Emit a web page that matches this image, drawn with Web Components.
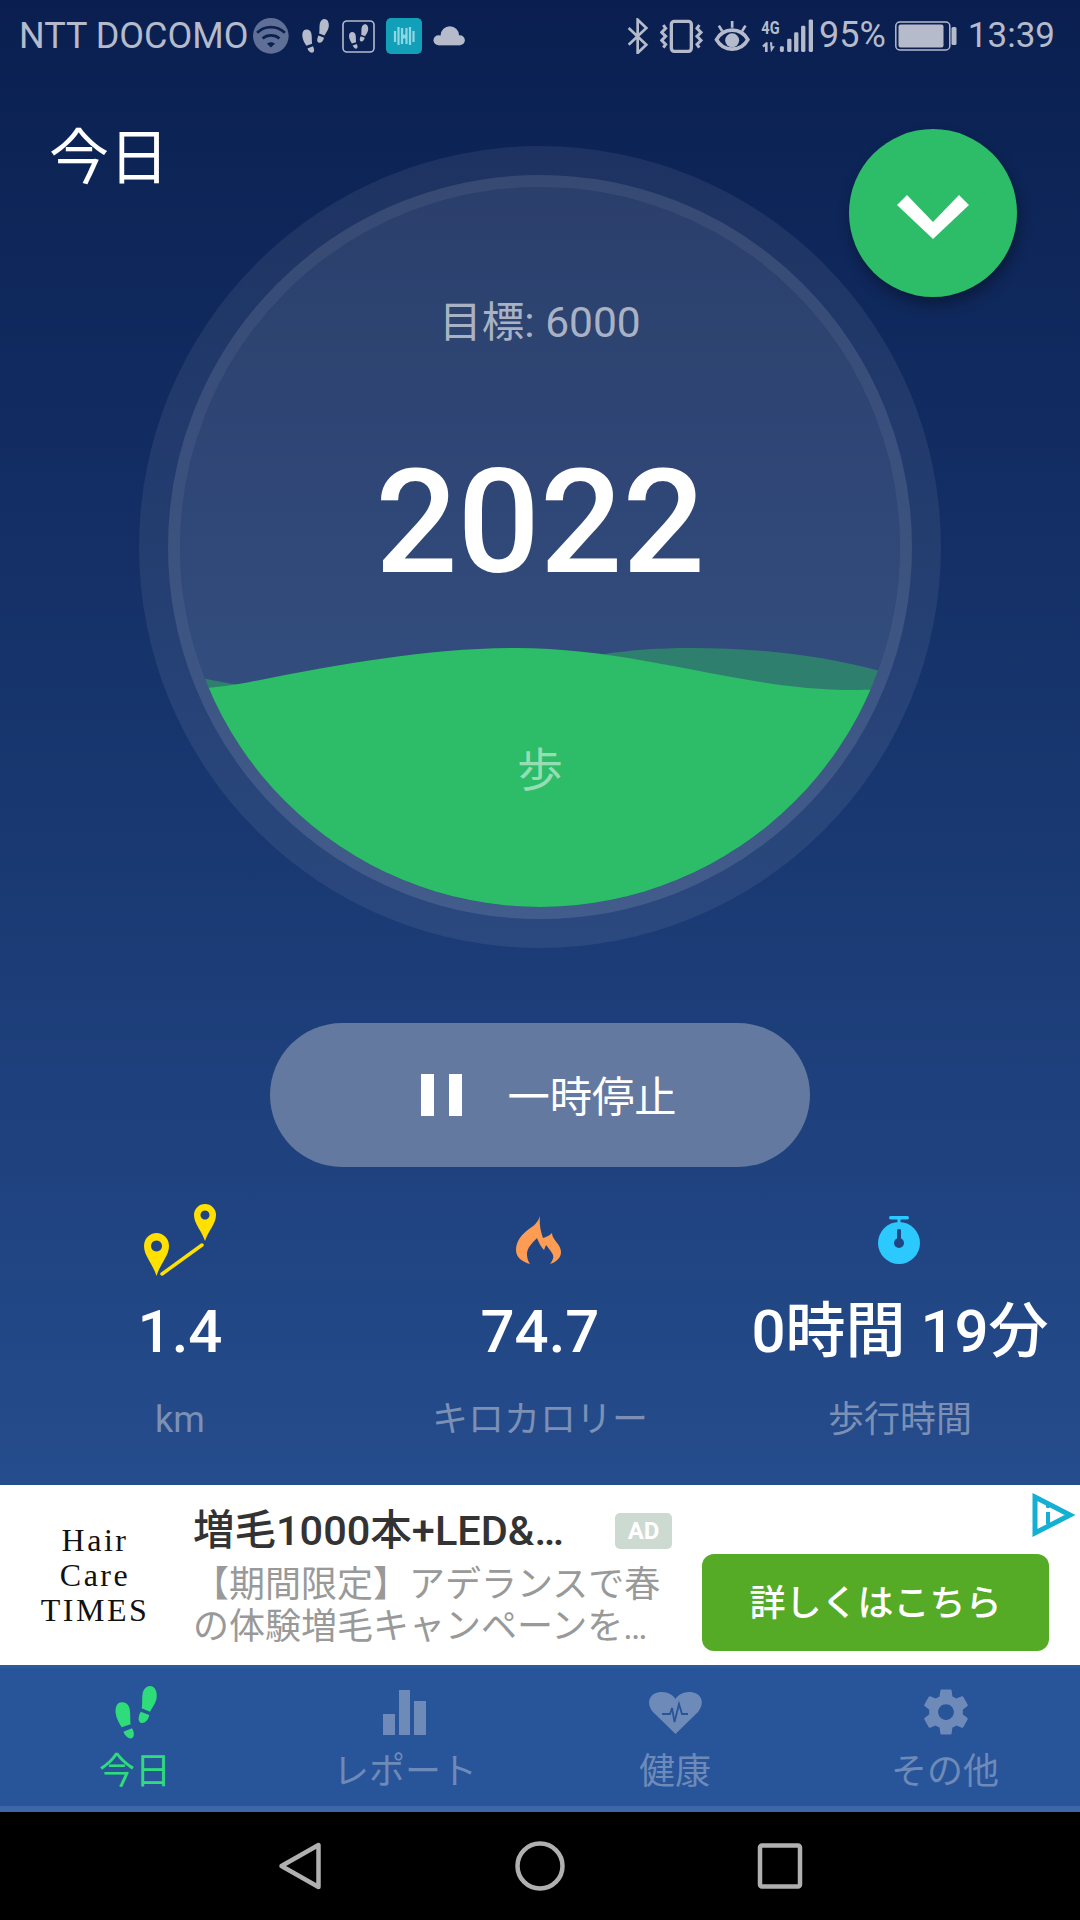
<!DOCTYPE html>
<html lang="ja">
<head>
<meta charset="utf-8">
<title>今日</title>
<style>
html,body{margin:0;padding:0;background:#000}
body{width:1080px;height:1920px;overflow:hidden;font-family:Roboto,"Noto Sans CJK JP",sans-serif}
</style>
</head>
<body>
<app-screen>
  <status-bar></status-bar>
  <today-title>今日</today-title>
  <step-dial goal="目標: 6000" steps="2022" unit="歩"></step-dial>
  <pause-button>一時停止</pause-button>
  <stat-row>
    <stat-item value="1.4" label="km">
      <svg slot="icon" width="360" height="72" viewBox="0 1204 360 72">
        <path fill="#ffe000" fill-rule="evenodd" d="M156.5 1276 C153 1264 144 1256 144 1246 A12.5 13 0 0 1 169 1246 C169 1256 160 1264 156.5 1276Z M156.5 1240.5a5.5 5.5 0 1 0 .01 0Z"/>
        <path fill="#ffe000" fill-rule="evenodd" d="M205 1241 C202 1231 194 1224 194 1215 A11 11 0 0 1 216 1215 C216 1224 208 1231 205 1241Z M205 1210.5a4.5 4.5 0 1 0 .01 0Z"/>
        <path stroke="#ffe000" stroke-width="3.5" stroke-linecap="round" d="M162 1274 L202 1245"/>
      </svg>
    </stat-item>
    <stat-item value="74.7" label="キロカロリー">
      <svg slot="icon" width="360" height="72" viewBox="360 1204 360 72">
        <path fill="#ff9c54" d="M540 1216 C539 1225 541 1232 543 1238 C546 1237 549 1236 552 1233 C552 1240 561 1244 561 1252 C561 1258 556 1262 550 1264 C554 1259 554 1256 552 1253 C550 1250 548 1247 546 1245 L544 1250 C541 1247 539 1243 537 1238 C532 1243 527 1248 527 1254 C527 1258 528 1261 530 1264 C523 1262 516 1258 516 1250 C516 1241 522 1234 529 1229 C534 1226 538 1222 540 1216Z"/>
      </svg>
    </stat-item>
    <stat-item value="0時間 19分" label="歩行時間">
      <svg slot="icon" width="360" height="72" viewBox="720 1204 360 72">
        <rect x="889" y="1216" width="20" height="3.5" rx="1.7" fill="#2cc9ff"/>
        <rect x="897.5" y="1219" width="3" height="5" fill="#2cc9ff"/>
        <circle cx="899" cy="1243" r="21" fill="#2cc9ff"/>
        <rect x="897" y="1229" width="4" height="14" rx="1.5" fill="#1f4583"/>
        <circle cx="899" cy="1243" r="5" fill="#1f4583"/>
      </svg>
    </stat-item>
  </stat-row>
  <ad-banner></ad-banner>
  <tab-bar>
    <tab-item active label="今日">
      <svg slot="icon" width="270" height="56" viewBox="0 1684 270 56">
        <g fill="#2edc7a" transform="translate(100 1675) scale(.3333)">
          <path d="M68 82C52 80 45 95 47 115C49 132 58 145 65 157L92 148C90 130 92 110 88 98C85 88 78 83 68 82Z"/>
          <path d="M70 170L96 160C102 170 104 182 98 188C90 194 78 188 70 170Z"/>
          <path d="M150 33C165 33 172 50 170 68C168 85 155 100 150 110L125 100C128 85 125 70 128 55C131 42 140 33 150 33Z"/>
          <path d="M122 110L148 120C145 135 135 145 125 144C115 142 112 130 122 110Z"/>
        </g>
      </svg>
    </tab-item>
    <tab-item label="レポート">
      <svg slot="icon" width="270" height="56" viewBox="270 1684 270 56" fill="#6d8ab8">
        <rect x="383" y="1714" width="12" height="21"/>
        <rect x="399" y="1690" width="11" height="45"/>
        <rect x="414" y="1701" width="12" height="34"/>
      </svg>
    </tab-item>
    <tab-item label="健康">
      <svg slot="icon" width="270" height="56" viewBox="540 1684 270 56">
        <path fill="#6d8ab8" d="M675.5 1734L653 1712C645 1702 650 1692 662 1692C668 1692 673 1695 675.5 1699C678 1695 683 1692 689 1692C701 1692 706 1702 698 1712Z"/>
        <path fill="none" stroke="#28549a" stroke-width="1.8" d="M662 1714H670L672 1708L674.500 1722L679 1704L682 1714H688"/>
      </svg>
    </tab-item>
    <tab-item label="その他">
      <svg slot="icon" width="270" height="56" viewBox="810 1684 270 56">
        <g transform="translate(919 1685) scale(2.25)"><path fill="#6d8ab8" d="M19.43 12.98c.04-.32.07-.64.07-.98s-.03-.66-.07-.98l2.11-1.65c.19-.15.24-.42.12-.64l-2-3.46c-.12-.22-.39-.3-.61-.22l-2.49 1c-.52-.4-1.08-.73-1.69-.98l-.38-2.65C14.46 2.18 14.25 2 14 2h-4c-.25 0-.46.18-.49.42l-.38 2.65c-.61.25-1.17.59-1.69.98l-2.49-1c-.23-.09-.49 0-.61.22l-2 3.46c-.13.22-.07.49.12.64l2.11 1.65c-.04.32-.07.65-.07.98s.03.66.07.98l-2.11 1.65c-.19.15-.24.42-.12.64l2 3.46c.12.22.39.3.61.22l2.49-1c.52.4 1.08.73 1.69.98l.38 2.65c.03.24.24.42.49.42h4c.25 0 .46-.18.49-.42l.38-2.65c.61-.25 1.17-.59 1.69-.98l2.49 1c.23.09.49 0 .61-.22l2-3.46c.12-.22.07-.49-.12-.64l-2.11-1.65zM12 15.5c-1.93 0-3.5-1.57-3.5-3.5s1.57-3.5 3.5-3.5 3.5 1.57 3.5 3.5-1.57 3.5-3.5 3.5z"/></g>
      </svg>
    </tab-item>
  </tab-bar>
  <system-nav></system-nav>
</app-screen>
<script>
const FEET = `
  <path d="M68 82C52 80 45 95 47 115C49 132 58 145 65 157L92 148C90 130 92 110 88 98C85 88 78 83 68 82Z"/>
  <path d="M70 170L96 160C102 170 104 182 98 188C90 194 78 188 70 170Z"/>
  <path d="M150 33C165 33 172 50 170 68C168 85 155 100 150 110L125 100C128 85 125 70 128 55C131 42 140 33 150 33Z"/>
  <path d="M122 110L148 120C145 135 135 145 125 144C115 142 112 130 122 110Z"/>`;

function define(name, html, init) {
  customElements.define(name, class extends HTMLElement {
    connectedCallback() {
      if (this.shadowRoot) return;
      const root = this.attachShadow({mode: 'open'});
      root.innerHTML = typeof html === 'function' ? html(this) : html;
      if (init) init(root, this);
    }
  });
}

define('app-screen', `
  <style>
    :host{display:flex;flex-direction:column;position:relative;width:1080px;height:1920px;overflow:hidden;
      background:linear-gradient(180deg,#0a1f50 0,#254c8c 1485px);color:#fff}
  </style><slot></slot>`);

const C = '#b5bbcb';
define('status-bar', `
  <style>
    :host{display:flex;justify-content:space-between;align-items:center;box-sizing:border-box;height:72px;padding:0 25px 0 19px;
      font:400 36px/72px Roboto,sans-serif;color:${C};flex:none}
    .g{display:flex;align-items:center}
    svg{display:block;flex:none}
    .l svg{margin-left:11px}
    .l svg:first-of-type{margin-left:5px}
    .r svg,.r span{margin-left:11px}
    .r span.pct{margin-left:6px;position:relative;top:-1px}
    .r svg.batt{margin-left:9px}
    .time{font-size:35px}
  </style>
  <div class="g l">
    <span>NTT DOCOMO</span>
    <svg width="36" height="36" viewBox="36 27 105 105">
      <circle cx="88" cy="79" r="52" fill="#5f6f96"/>
      <g fill="none" stroke="#0b2150" stroke-width="8"><path d="M48 70C70 48 106 48 129 70"/><path d="M64 87C77 75 100 75 113 87"/></g>
      <path d="M77 102C83 96 94 96 100 102L88 113Z" fill="#0b2150"/>
    </svg>
    <svg width="31" height="36" viewBox="40 28 136 168" fill="${C}">${FEET}</svg>
    <svg width="33" height="33" viewBox="0 0 33 33"><rect x="1" y="1" width="31" height="31" rx="4" fill="none" stroke="${C}" stroke-width="1.6"/><g fill="${C}" transform="translate(-.2 -.8) scale(.155)">${FEET}</g></svg>
    <svg width="36" height="36" viewBox="0 0 36 36">
      <rect width="36" height="36" rx="5" fill="#12a0b8"/>
      <g fill="none" stroke="#8fd6e2" stroke-width="2.200">
        <path d="M9 13V24M12.500 9V27M16 10V26M20.500 10V26M24 9V27M27.500 13V24M16 16C18 19 18.500 19 20.500 16M16 21C18 18 18.500 18 20.500 21"/>
      </g>
    </svg>
    <svg width="34" height="20" viewBox="578 47 101 60" fill="${C}">
      <circle cx="628" cy="76" r="28"/><circle cx="658" cy="90" r="15"/><circle cx="594" cy="90" r="15"/><rect x="594" y="80" width="64" height="25"/>
    </svg>
  </div>
  <div class="g r">
    <svg width="22" height="36" viewBox="20 25 66 108" fill="none" stroke="${C}" stroke-width="8"><path d="M25 55L78 105L52 130V30L78 55L25 105"/></svg>
    <svg width="43" height="34" viewBox="120 28 129 102" fill="none" stroke="${C}">
      <rect x="154" y="35" width="60" height="90" rx="9" stroke-width="10"/>
      <path stroke-width="9" d="M130 46L137 56L125 68L137 80L125 92L137 104L130 114"/>
      <path stroke-width="9" d="M238 46L231 56L243 68L231 80L243 92L231 104L238 114"/>
    </svg>
    <svg width="36" height="33" viewBox="283 29 105 99" fill="none" stroke="${C}">
      <path stroke-width="11" d="M289 88C310 50 362 50 383 88C362 126 310 126 289 88Z"/>
      <circle cx="336" cy="90" r="21" fill="${C}" stroke="none"/>
      <path stroke-width="8" d="M336 32V52M296 46L306 62M376 46L366 62"/>
    </svg>
    <svg width="52" height="39" viewBox="424 14 157 117" style="margin-top:-4px">
      <text x="425" y="70" font-family="Roboto,sans-serif" font-weight="700" font-size="56" fill="${C}" textLength="55" lengthAdjust="spacingAndGlyphs">4G</text>
      <g fill="${C}">
        <path d="M428 106L439 96H444V125H436V108L432 112Z"/><path d="M451 96H458V108H466L454 126Z"/>
        <rect x="481" y="108" width="12" height="17" rx="4"/><rect x="503" y="85" width="13" height="40" rx="4"/>
        <rect x="524" y="66" width="13" height="59" rx="4"/><rect x="545" y="46" width="13" height="79" rx="4"/>
        <rect x="568" y="27" width="13" height="98" rx="4"/>
      </g>
    </svg>
    <span class="pct">95%</span>
    <svg class="batt" width="62" height="30" viewBox="0 0 62 30">
      <rect x=".8" y="1" width="54" height="28" rx="4" fill="none" stroke="${C}" stroke-width="1.5"/>
      <rect x="3.500" y="3.500" width="45" height="23" rx="2" fill="${C}"/>
      <rect x="56.500" y="6" width="5" height="18" rx="1.500" fill="${C}"/>
    </svg>
    <span class="time">13:39</span>
  </div>`);

define('today-title', `
  <style>
    :host{display:block;flex:none;height:74px;margin-top:44px;margin-bottom:4px;padding-left:49px;font:400 60px/74px "Noto Sans CJK JP",sans-serif;color:#fff}
  </style><slot></slot>`);

define('step-dial', h => `
  <style>
    :host{display:grid;flex:none;width:802px;height:802px;margin:-48px auto 0;position:relative}
    .art,.txt{grid-area:1/1}
    svg{display:block}
    .txt{display:flex;flex-direction:column;align-items:center;padding-top:147px;font-family:Roboto,"Noto Sans CJK JP",sans-serif;z-index:1}
    .goal{font-size:42.500px;line-height:60px;color:rgba(255,255,255,.62)}
    .steps{font-size:145px;line-height:170px;font-weight:500;margin-top:84px;color:#fff}
    .unit{font-size:46px;line-height:60px;margin-top:133px;color:rgba(255,255,255,.5)}
    .fab{position:absolute;left:710px;top:-17px;width:168px;height:168px;border-radius:50%;background:#2dbc67;box-shadow:2px 8px 14px rgba(0,0,0,.32);z-index:2}
    .fab svg{position:absolute;left:0;top:0}
  </style>
  <div class="art">
  <svg width="802" height="802" viewBox="139 146 802 802">
    <defs><clipPath id="c"><circle cx="540" cy="547" r="360"/></clipPath></defs>
    <circle cx="540" cy="547" r="401" fill="#fff" fill-opacity=".07"/>
    <circle cx="540" cy="547" r="366" fill="none" stroke="#fff" stroke-opacity=".11" stroke-width="12"/>
    <circle cx="540" cy="547" r="360" fill="#fff" fill-opacity=".06"/>
    <g clip-path="url(#c)">
      <path fill="#2e7f6e" d="M170 672L243 686L430 695L605 654C630 650 660 648 690 648C760 648 820 655 880 671L920 682V760H170Z"/>
      <path fill="#2dbc67" d="M170 693C200 688 225 687 250 682C340 664 430 648 516 648C640 648 740 690 854 690C870 690 890 689 920 686V920H170Z"/>
    </g>
  </svg>
  </div>
  <div class="txt">
    <div class="goal">${h.getAttribute('goal')}</div>
    <div class="steps">${h.getAttribute('steps')}</div>
    <div class="unit">${h.getAttribute('unit')}</div>
  </div>
  <div class="fab"><svg width="168" height="168" viewBox="849 129 168 168"><path fill="#fff" d="M907 195L897 205L933 239L969 205L959 195L933 222Z"/></svg></div>`);

define('pause-button', `
  <style>
    :host{display:flex;flex:none;align-items:center;justify-content:center;gap:45px;width:540px;height:144px;margin:75px auto 0;border-radius:72px;background:#64799f;color:#fff;
      font:400 42.300px/1 "Noto Sans CJK JP",sans-serif;box-sizing:border-box;padding-left:18px}
    .p{display:flex;gap:15px}
    .p i{display:block;width:13px;height:42px;background:#fff}
    span{position:relative;top:-1px}
  </style>
  <div class="p"><i></i><i></i></div><span><slot></slot></span>`);

define('stat-row', `
  <style>:host{display:grid;grid-template-columns:repeat(3,360px);flex:none;margin-top:37px;height:281px}</style><slot></slot>`);

define('stat-item', h => `
  <style>
    :host{display:flex;flex-direction:column;align-items:center;font-family:Roboto,"Noto Sans CJK JP",sans-serif}
    ::slotted(svg){display:block}
    .i{height:72px}
    .v{font-size:60px;line-height:70px;font-weight:500;color:#fff;margin-top:21px;white-space:nowrap}
    .l{font-size:36px;line-height:48px;color:#7c90b6;margin-top:29px;white-space:nowrap}
  </style>
  <div class="i"><slot name="icon"></slot></div>
  <div class="v">${h.getAttribute('value')}</div>
  <div class="l">${h.getAttribute('label')}</div>`);

define('ad-banner', `
  <style>
    :host{display:flex;flex:none;position:relative;height:180px;background:#fff;font-family:Roboto,"Noto Sans CJK JP",sans-serif}
    .logo{width:193px;flex:none;box-sizing:border-box;padding:38px 0 0 0;text-align:center;font:400 32px/35px "Liberation Serif",serif;color:#111;letter-spacing:2.500px}
    .logo div{width:190px}
    .mid{flex:none;width:509px}
    .t{display:flex;align-items:center;height:36px;margin-top:28px;width:479px;justify-content:space-between}
    .tt{font-size:41.500px;line-height:36px;font-weight:500;color:#333;white-space:nowrap}
    .ad{width:57px;height:36px;border-radius:5px;background:#ccdad2;color:#fff;font:700 24px/36px Roboto,sans-serif;text-align:center}
    .d{margin-top:15px;font:400 36px/42px Roboto,"Noto Sans CJK JP",sans-serif;color:#999;white-space:nowrap}
    .btn{flex:none;align-self:flex-start;margin-top:69px;width:347px;height:97px;border-radius:12px;background:#55ab25;color:#fff;
      font:500 36px/93px "Noto Sans CJK JP",sans-serif;text-align:center}
    svg{position:absolute;left:1030px;top:7px}
  </style>
  <div class="logo"><div>Hair</div><div>Care</div><div>TIMES</div></div>
  <div class="mid">
    <div class="t"><span class="tt">増毛1000本+LED&amp;…</span><span class="ad">AD</span></div>
    <div class="d">【期間限定】アデランスで春<br>の体験増毛キャンペーンを…</div>
  </div>
  <div class="btn">詳しくはこちら</div>
  <svg width="46" height="46" viewBox="1030 1492 46 46" fill="none" stroke="#14b0d4">
    <path stroke-width="5" d="M1035 1497L1070 1515L1035 1533Z"/>
    <path stroke-width="4" d="M1048 1512V1524"/><circle cx="1048" cy="1506" r="2.200" fill="#14b0d4" stroke="none"/>
  </svg>`);

define('tab-bar', `
  <style>
    :host{display:grid;grid-template-columns:repeat(4,270px);flex:none;box-sizing:border-box;height:147px;background:#28549a;border-top:3px solid #2d5a9f;border-bottom:6px solid #3e66a8}
  </style><slot></slot>`);

define('tab-item', h => `
  <style>
    :host{display:flex;flex-direction:column;align-items:center;padding-top:16px;color:#6d8ab8;font:400 36px/48px Roboto,"Noto Sans CJK JP",sans-serif}
    :host([active]){color:#2edc7a}
    .i{height:56px}
    .l{margin-top:8px;white-space:nowrap}
    ::slotted(svg){display:block}
  </style>
  <div class="i"><slot name="icon"></slot></div>
  <div class="l">${h.getAttribute('label')}</div>`);

define('system-nav', `
  <style>
    :host{display:block;flex:none;height:108px;background:#000}
    svg{display:block}
  </style>
  <svg width="1080" height="108" viewBox="0 1812 1080 108" fill="none" stroke="#b0b0b0" stroke-width="4.500" stroke-linejoin="round">
    <path d="M318.500 1845V1887L281.500 1866Z"/>
    <circle cx="540" cy="1866" r="22.500"/>
    <rect x="760" y="1845.500" width="40" height="41" rx="2"/>
  </svg>`);
</script>
</body>
</html>
